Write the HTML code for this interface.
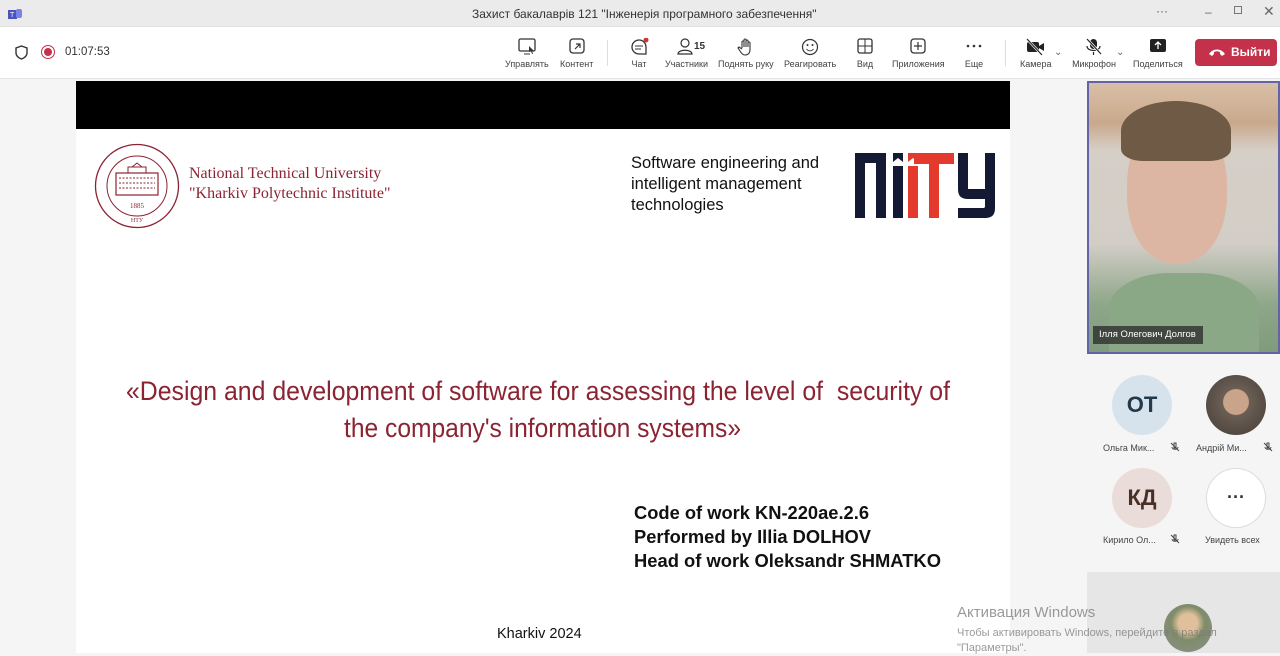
<!DOCTYPE html>
<html><head><meta charset="utf-8"><style>
*{margin:0;padding:0;box-sizing:border-box}
body{width:1280px;height:653px;overflow:hidden;background:#f5f5f5;font-family:"Liberation Sans",sans-serif;position:relative}
.abs{position:absolute}
.tb{left:0;top:0;width:1280px;height:27px;background:#ebebeb;border-bottom:1px solid #e0e0e0}
.bar{left:0;top:27px;width:1280px;height:52px;background:#fff;border-bottom:1px solid #e3e3e3}
.btn{position:absolute;top:9px;font-size:9px;color:#424242;text-align:center;white-space:nowrap}
.btn svg{display:block;margin:0 auto 3px}
.lbl{font-size:9px;color:#444;white-space:nowrap}
.t1{font-family:"Liberation Sans Narrow","Liberation Sans",sans-serif;font-stretch:condensed;color:#8b2332;font-size:27px;white-space:nowrap;position:absolute;transform-origin:0 0}
.dark{position:absolute;font-family:"Liberation Sans",sans-serif;font-weight:bold;font-size:18px;color:#111;white-space:nowrap;transform-origin:0 0}
</style></head><body>
<div class="abs tb"></div>
<svg class="abs" style="left:8px;top:7px" width="14" height="13"><rect x="0" y="3" width="9" height="9" fill="#4b53bc"/><rect x="8" y="2" width="6" height="9" rx="2" fill="#7b83eb"/><text x="2" y="10" font-size="7" fill="#fff" font-family="Liberation Sans">T</text></svg>
<div class="abs" style="left:472px;top:7px;font-size:12px;color:#333">Захист бакалаврів 121 "Інженерія програмного забезпечення"</div>
<div class="abs" style="left:1156px;top:4px;font-size:12px;color:#555">···</div>
<div class="abs" style="left:1205px;top:5px;font-size:12px;color:#666">–</div>
<div class="abs" style="left:1234px;top:6px;width:8px;height:8px;border:1px solid #777"></div>
<div class="abs" style="left:1263px;top:3px;font-size:14px;color:#666">✕</div>

<div class="abs bar"></div>
<svg class="abs" style="left:15px;top:45px" width="13" height="15"><path d="M6.5 1 L12 3 V8 C12 11 9 13 6.5 14 C4 13 1 11 1 8 V3 Z" fill="none" stroke="#333" stroke-width="1.4"/></svg>
<div class="abs" style="left:41px;top:45px;width:14px;height:14px;border-radius:50%;border:1.5px solid #c4314b"></div>
<div class="abs" style="left:44px;top:48px;width:8px;height:8px;border-radius:50%;background:#c4314b"></div>
<div class="abs" style="left:65px;top:46px;font-size:11.5px;color:#333">01:07:53</div>

<div class="btn" style="left:505px;top:38px"><svg width="20" height="18"><rect x="2" y="1" width="16" height="12" rx="1.5" fill="none" stroke="#333" stroke-width="1.3"/><path d="M7 16h6" stroke="#333"/><path d="M12 8l5 5-2 0 1 3-1 0-1-3-2 1z" fill="#333"/></svg>Управлять</div>
<div class="btn" style="left:560px;top:38px"><svg width="20" height="18"><rect x="3" y="1" width="14" height="14" rx="3" fill="none" stroke="#333" stroke-width="1.3"/><path d="M8 11l5-5M9 6h4v4" stroke="#333" fill="none" stroke-width="1.2"/></svg>Контент</div>
<div class="abs" style="left:607px;top:40px;width:1px;height:26px;background:#ddd"></div>
<div class="btn" style="left:629px;top:38px"><svg width="20" height="18"><path d="M10 2a7 7 0 1 0 0 14h7v-7a7 7 0 0 0-7-7z" fill="none" stroke="#333" stroke-width="1.3"/><path d="M6 8h8M6 11h6" stroke="#333"/><circle cx="17" cy="2" r="2.5" fill="#d13438"/></svg>Чат</div>
<div class="btn" style="left:665px;top:38px"><svg width="36" height="18"><circle cx="16" cy="5" r="4" fill="none" stroke="#333" stroke-width="1.2"/><path d="M9 16c0-5 14-5 14 0z" fill="none" stroke="#333" stroke-width="1.2"/><text x="25" y="11" font-size="10" font-weight="bold" fill="#333" font-family="Liberation Sans">15</text></svg>Участники</div>
<div class="btn" style="left:718px;top:38px"><svg width="20" height="18"><path d="M6 10V4a1 1 0 0 1 2 0v5V2a1 1 0 0 1 2 0v7V3a1 1 0 0 1 2 0v6V5a1 1 0 0 1 2 0v7c0 3-2 5-5 5-2 0-3-1-5-4l-2-3 1-1 3 2" fill="none" stroke="#333" stroke-width="1.1"/></svg>Поднять руку</div>
<div class="btn" style="left:784px;top:38px"><svg width="20" height="18"><circle cx="10" cy="9" r="7.5" fill="none" stroke="#333" stroke-width="1.2"/><circle cx="7.5" cy="7" r="1" fill="#333"/><circle cx="12.5" cy="7" r="1" fill="#333"/><path d="M6.5 11c2 2.5 5 2.5 7 0" fill="none" stroke="#333"/></svg>Реагировать</div>
<div class="btn" style="left:855px;top:38px"><svg width="20" height="18"><rect x="3" y="1" width="14" height="14" rx="2" fill="none" stroke="#333" stroke-width="1.3"/><path d="M10 1v14M3 8h14" stroke="#333"/></svg>Вид</div>
<div class="btn" style="left:892px;top:38px"><svg width="20" height="18"><rect x="3" y="1" width="14" height="14" rx="3" fill="none" stroke="#333" stroke-width="1.3"/><path d="M10 4v8M6 8h8" stroke="#333" stroke-width="1.2"/></svg>Приложения</div>
<div class="btn" style="left:964px;top:38px"><svg width="20" height="18"><circle cx="4" cy="8" r="1.3" fill="#333"/><circle cx="10" cy="8" r="1.3" fill="#333"/><circle cx="16" cy="8" r="1.3" fill="#333"/></svg>Еще</div>
<div class="abs" style="left:1005px;top:40px;width:1px;height:26px;background:#ddd"></div>
<div class="btn" style="left:1020px;top:38px"><svg width="24" height="18"><rect x="3" y="4" width="12" height="10" rx="2" fill="#222"/><path d="M15 8l5-3v8l-5-3z" fill="#222"/><path d="M3 1l15 16" stroke="#fff" stroke-width="2.5"/><path d="M3 1l15 16" stroke="#222" stroke-width="1.2"/></svg>Камера</div>
<div class="abs" style="left:1054px;top:47px;font-size:10px;color:#666">⌄</div>
<div class="btn" style="left:1071px;top:38px"><svg width="46" height="18"><rect x="19" y="1" width="7" height="10" rx="3.5" fill="#222"/><path d="M16 8c0 6 13 6 13 0M22.5 14v3" fill="none" stroke="#222" stroke-width="1.2"/><path d="M16 1l14 15" stroke="#fff" stroke-width="2.5"/><path d="M16 1l14 15" stroke="#222" stroke-width="1.2"/></svg>Микрофон</div>
<div class="abs" style="left:1116px;top:47px;font-size:10px;color:#666">⌄</div>
<div class="btn" style="left:1133px;top:38px"><svg width="48" height="18"><rect x="16" y="1" width="16" height="13" rx="2" fill="#222"/><path d="M24 11V5M21 7l3-3 3 3" stroke="#fff" fill="none" stroke-width="1.3"/></svg>Поделиться</div>
<div class="abs" style="left:1195px;top:39px;width:82px;height:27px;background:#c4314b;border-radius:4px;color:#fff;font-size:12px;font-weight:bold;line-height:27px;padding-left:36px">Выйти</div>
<svg class="abs" style="left:1208px;top:47px" width="18" height="10"><path d="M1 7c4-6 12-6 16 0l-3 2-2-2v-2c-2-1-4-1-6 0v2l-2 2z" fill="#fff"/></svg>

<!-- slide -->
<div class="abs" style="left:76px;top:81px;width:934px;height:48px;background:#000"></div>
<div class="abs" style="left:76px;top:129px;width:934px;height:524px;background:#fff"></div>
<svg class="abs" style="left:94px;top:143px" width="86" height="86">
<circle cx="43" cy="43" r="41.5" fill="none" stroke="#8b2332" stroke-width="1.3"/>
<circle cx="43" cy="43" r="30" fill="none" stroke="#8b2332" stroke-width="1"/>
<rect x="22" y="30" width="42" height="22" fill="none" stroke="#8b2332" stroke-width="1.2"/>
<path d="M34 30v-6h18v6M38 24l5-4 5 4" fill="none" stroke="#8b2332"/>
<path d="M25 35h36M25 40h36M25 45h36" stroke="#8b2332" stroke-dasharray="2 1.5"/>
<text x="43" y="65" font-size="7" text-anchor="middle" fill="#8b2332" font-family="Liberation Serif">1885</text>
<text x="43" y="79" font-size="6" text-anchor="middle" fill="#8b2332" font-family="Liberation Serif">НТУ</text>
</svg>
<div class="abs" style="left:189px;top:164px;font-family:'Liberation Serif',serif;font-size:16px;line-height:20px;color:#8b2332">National Technical University<br>"Kharkiv Polytechnic Institute"</div>
<div class="abs" style="left:631px;top:153px;font-size:16.5px;line-height:21px;color:#111">Software engineering and<br>intelligent management<br>technologies</div>
<svg class="abs" style="left:850px;top:150px" width="145" height="72">
<path d="M5 3h31v65h-10V13h-11v55H5z" fill="#141a33"/>
<rect x="43" y="16" width="10" height="52" fill="#141a33"/><path d="M43 3h10v9l-5-4-5 4z" fill="#141a33"/>
<rect x="58" y="16" width="10" height="52" fill="#e43a2e"/><path d="M58 3h10v9l-5-4-5 4z" fill="#e43a2e"/>
<path d="M64 3h40v11H89v54H79V14H64z" fill="#e43a2e"/>
<path d="M108 3h10v36h17V3h10v55c0 7-3 10-10 10h-27V58h25c2 0 2-1 2-2V49h-17c-7 0-10-3-10-10z" fill="#141a33"/>
</svg>
<div class="t1" id="a" style="left:126px;top:376px">«Design and development of software for assessing the level of&nbsp; security of</div>
<div class="t1" id="b" style="left:344px;top:413px">the company's information systems»</div>
<div class="dark" id="c" style="left:634px;top:503px">Code of work KN-220ae.2.6</div>
<div class="dark" id="d" style="left:634px;top:527px">Performed by Illia DOLHOV</div>
<div class="dark" id="e" style="left:634px;top:551px">Head of work Oleksandr SHMATKO</div>
<div class="abs" style="left:497px;top:626px;font-size:14.5px;color:#111">Kharkiv 2024</div>

<!-- right panel -->
<div class="abs" style="left:1087px;top:81px;width:193px;height:273px;border:2.5px solid #6264a7;background:linear-gradient(180deg,#d9bfa7 0,#c9a98d 15%,#d6cfc8 25%,#d2cdc6 60%,#8fa78a 82%,#7f9a7c 100%);overflow:hidden">
<div style="position:absolute;left:38px;top:30px;width:100px;height:150px;border-radius:48% 48% 45% 45%;background:#dcb6a3"></div>
<div style="position:absolute;left:32px;top:18px;width:110px;height:60px;border-radius:50% 50% 20% 20%;background:#6e5a45"></div>
<div style="position:absolute;left:20px;top:190px;width:150px;height:90px;border-radius:40% 40% 0 0;background:#8aa886"></div>
<div style="position:absolute;left:4px;top:243px;width:110px;height:18px;background:rgba(40,40,40,.75);color:#fff;font-size:9.5px;line-height:18px;padding-left:6px;white-space:nowrap">Ілля Олегович Долгов</div>
</div>
<div class="abs" style="left:1112px;top:375px;width:60px;height:60px;border-radius:50%;background:#d7e3ec;color:#243a4a;font-size:22px;font-weight:bold;text-align:center;line-height:60px">OT</div>
<div class="abs" style="left:1206px;top:375px;width:60px;height:60px;border-radius:50%;background:radial-gradient(circle at 50% 45%,#c9a48a 0 28%,#6a5e54 30%,#443c36 100%)"></div>
<div class="abs lbl" style="left:1103px;top:443px">Ольга Мик...</div>
<div class="abs lbl" style="left:1196px;top:443px">Андрій Ми...</div>
<div class="abs lbl" style="left:1103px;top:535px">Кирило Ол...</div>
<svg class="abs" style="left:1170px;top:442px" width="10" height="10"><path d="M4 1h2v5H4zM2 5c0 3 6 3 6 0M1 1l8 8" stroke="#444" fill="none" stroke-width="1"/></svg>
<svg class="abs" style="left:1263px;top:442px" width="10" height="10"><path d="M4 1h2v5H4zM2 5c0 3 6 3 6 0M1 1l8 8" stroke="#444" fill="none" stroke-width="1"/></svg>
<svg class="abs" style="left:1170px;top:534px" width="10" height="10"><path d="M4 1h2v5H4zM2 5c0 3 6 3 6 0M1 1l8 8" stroke="#444" fill="none" stroke-width="1"/></svg>
<div class="abs" style="left:1112px;top:468px;width:60px;height:60px;border-radius:50%;background:#eadcd8;color:#4a2f28;font-size:22px;font-weight:bold;text-align:center;line-height:60px">КД</div>
<div class="abs" style="left:1206px;top:468px;width:60px;height:60px;border-radius:50%;background:#fff;border:1px solid #ddd;text-align:center;line-height:56px;font-size:18px;font-weight:bold;color:#333">···</div>
<div class="abs lbl" style="left:1205px;top:535px">Увидеть всех</div>
<div class="abs" style="left:1087px;top:572px;width:193px;height:81px;background:#e6e6e6"></div>
<div class="abs" style="left:1164px;top:604px;width:48px;height:48px;border-radius:50%;background:radial-gradient(circle at 50% 40%,#e0c09a 0 25%,#7f8c6a 45%,#8a8f8a 100%)"></div>
<div class="abs" style="left:957px;top:604px;font-size:15px;color:rgba(120,120,120,.75)">Активация Windows</div>
<div class="abs" style="left:957px;top:626px;font-size:11px;color:rgba(120,120,120,.75);line-height:15px">Чтобы активировать Windows, перейдите в раздел<br>"Параметры".</div>
<script>
[['a',824],['b',397],['c',235],['d',237],['e',307]].forEach(function(p){var e=document.getElementById(p[0]);var w=e.getBoundingClientRect().width;e.style.transform='scaleX('+(p[1]/w)+')';});
</script>
</body></html>
